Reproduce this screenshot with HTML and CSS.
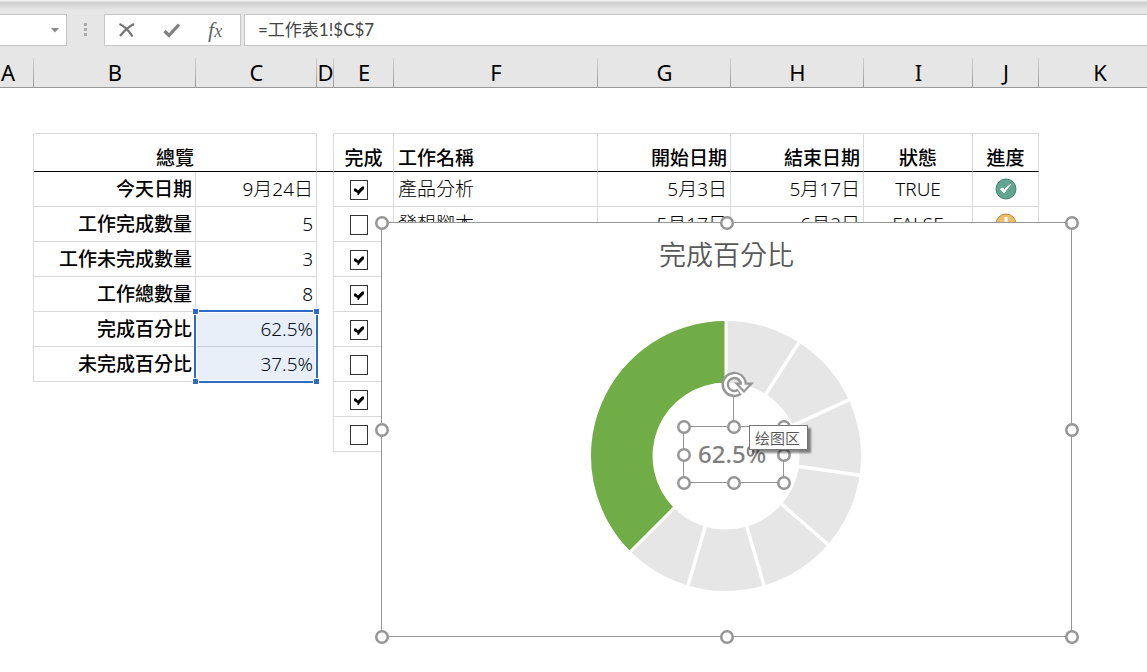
FILE: index.html
```html
<!DOCTYPE html>
<html lang="zh-Hant">
<head>
<meta charset="utf-8">
<title>工作表1</title>
<link rel="stylesheet" href="styles.css">
</head>
<body>
<header class="formula-bar">
  <div class="name-box">
    <input class="name-input" type="text" aria-label="名稱方塊">
    <button class="name-toggle" type="button" aria-label="展開名稱"><svg width="8" height="5" viewBox="0 0 8 5"><path d="M0 0h8L4 4.500z" fill="#888"/></svg></button>
  </div>
  <svg class="grip" width="4" height="14" viewBox="0 0 4 14"><path d="M0 0h3v3H0zM0 5h3v3H0zM0 10h3v3H0z" fill="#aaa"/></svg>
  <div class="actions">
    <button type="button" aria-label="取消"><svg width="18" height="16" viewBox="0 0 18 16"><path d="M1.500 2C6 4 11 9 14.500 14.500M16 2C10 5 6 9 2 14" fill="none" stroke="#757575" stroke-width="2.300"/></svg></button>
    <button type="button" aria-label="輸入"><svg width="18" height="16" viewBox="0 0 18 16"><path d="M1.500 9l4.500 4.500L16 2.500" fill="none" stroke="#808080" stroke-width="3.200"/></svg></button>
    <button class="fx" type="button" aria-label="插入函數">f<span class="fx-x">x</span></button>
  </div>
  <input class="formula" type="text" aria-label="資料編輯列" value="=工作表1!$C$7">
</header>

<main class="sheet">
  <table class="grid">
    <colgroup>
      <col class="w-a"><col class="w-b"><col class="w-c"><col class="w-d"><col class="w-e"><col class="w-f"><col class="w-g"><col class="w-g"><col class="w-i"><col class="w-j"><col>
    </colgroup>
    <thead>
      <tr class="letters"><th class="first" scope="col">A</th><th scope="col">B</th><th scope="col">C</th><th scope="col">D</th><th scope="col">E</th><th scope="col">F</th><th scope="col">G</th><th scope="col">H</th><th scope="col">I</th><th scope="col">J</th><th scope="col">K</th></tr>
    </thead>
    <tbody>
      <tr class="blank"><td></td><td class="line"></td><td class="line"></td><td></td><td class="line"></td><td class="line"></td><td class="line"></td><td class="line"></td><td class="line"></td><td class="line"></td><td></td></tr>
      <tr class="titles"><td class="side"></td><th class="cell" colspan="2">總覽</th><td class="cell"></td><th class="cell">完成</th><th class="cell left">工作名稱</th><th class="cell right">開始日期</th><th class="cell right">結束日期</th><th class="cell">狀態</th><th class="cell">進度</th><td></td></tr>
      <tr><td class="side"></td><th class="cell right">今天日期</th><td class="cell right">9月24日</td><td class="side"></td><td class="cell tick"><input type="checkbox" aria-label="產品分析" checked></td><td class="cell left">產品分析</td><td class="cell right">5月3日</td><td class="cell right">5月17日</td><td class="cell">TRUE</td><td class="cell"><svg class="status" width="22" height="22" viewBox="0 0 22 22"><circle cx="11" cy="11" r="10" fill="#62a591" stroke="#3f8170"/><path d="M5.500 11l3.500 4 2.500-3.500L16 6l-4.500 3.500-2 2L7 10z" fill="#fff" stroke="#fff"/></svg></td><td></td></tr>
      <tr><td class="side"></td><th class="cell right">工作完成數量</th><td class="cell right">5</td><td class="side"></td><td class="cell tick"><input type="checkbox" aria-label="發想腳本"></td><td class="cell left">發想腳本</td><td class="cell right">5月17日</td><td class="cell right">6月2日</td><td class="cell">FALSE</td><td class="cell"><svg class="status" width="22" height="22" viewBox="0 0 22 22"><circle cx="11" cy="11" r="10" fill="#e9bd6c" stroke="#b98a35"/><path d="M11 4v9M11 15v3" fill="none" stroke="#fff" stroke-width="3"/></svg></td><td></td></tr>
      <tr><td class="side"></td><th class="cell right">工作未完成數量</th><td class="cell right">3</td><td class="side"></td><td class="cell tick"><input type="checkbox" aria-label="工作 3" checked></td><td colspan="6"></td></tr>
      <tr><td class="side"></td><th class="cell right">工作總數量</th><td class="cell right">8</td><td class="side"></td><td class="cell tick"><input type="checkbox" aria-label="工作 4" checked></td><td colspan="6"></td></tr>
      <tr><td class="side"></td><th class="cell right">完成百分比</th><td class="cell right picked">62.5%<span class="range"><i class="knob tl"></i><i class="knob tr"></i><i class="knob bl"></i><i class="knob br"></i></span></td><td class="side"></td><td class="cell tick"><input type="checkbox" aria-label="工作 5" checked></td><td colspan="6"></td></tr>
      <tr><td class="side"></td><th class="cell right">未完成百分比</th><td class="cell right">37.5%</td><td class="side"></td><td class="cell tick"><input type="checkbox" aria-label="工作 6"></td><td colspan="6"></td></tr>
      <tr><td></td><td></td><td></td><td class="side"></td><td class="cell tick"><input type="checkbox" aria-label="工作 7" checked></td><td colspan="6"></td></tr>
      <tr><td></td><td></td><td></td><td class="side"></td><td class="cell tick"><input type="checkbox" aria-label="工作 8"></td><td colspan="6"></td></tr>
    </tbody>
  </table>

  <section class="chart" aria-label="完成百分比">
    <h2 class="chart-title">完成百分比</h2>
    <svg class="ring" width="690" height="414" viewBox="0 0 690 414">
      <g transform="translate(344 233)">
        <circle r="104.250" fill="none" stroke="#e6e6e6" stroke-width="61.500"/>
        <g stroke="#fff" stroke-width="3.500">
          <path d="M0-72V-137" transform="rotate(32.730)"/>
          <path d="M0-72V-137" transform="rotate(65.450)"/>
          <path d="M0-72V-137" transform="rotate(98.180)"/>
          <path d="M0-72V-137" transform="rotate(130.910)"/>
          <path d="M0-72V-137" transform="rotate(163.640)"/>
          <path d="M0-72V-137" transform="rotate(196.360)"/>
        </g>
        <path d="M0-135A135 135 0 0 0-95.460 95.460L-51.970 51.970A73.500 73.500 0 0 1 0-73.500z" fill="#70ad47"/>
        <path d="M0-72V-137M-50.900 50.900L-97 97" stroke="#fff" stroke-width="3"/>
      </g>
    </svg>
    <output class="percent">62.5%</output>
    <svg class="handles" width="690" height="414" viewBox="0 0 690 414">
      <path d="M302.500 204.500h100v56h-100zM352.500 174v30" fill="none" stroke="#969696"/>
      <g fill="#fff" stroke="#969696" stroke-width="2.500">
        <circle cx="1" cy="1" r="5.750"/><circle cx="346" cy="1" r="5.750"/><circle cx="691" cy="1" r="5.750"/>
        <circle cx="1" cy="208" r="5.750"/><circle cx="691" cy="208" r="5.750"/>
        <circle cx="1" cy="415" r="5.750"/><circle cx="346" cy="415" r="5.750"/><circle cx="691" cy="415" r="5.750"/>
        <circle cx="303" cy="205" r="5.750"/><circle cx="353" cy="205" r="5.750"/><circle cx="403" cy="205" r="5.750"/>
        <circle cx="303" cy="233" r="5.750"/><circle cx="403" cy="233" r="5.750"/>
        <circle cx="303" cy="261" r="5.750"/><circle cx="353" cy="261" r="5.750"/><circle cx="403" cy="261" r="5.750"/>
      </g>
      <g transform="translate(353 162.500)" fill="none">
        <path d="M5.500 7.300A9 9 0 1 1 9.200-.500" stroke="#969696" stroke-width="7.500"/>
        <path d="M2.500-.800H17.500L10 7z" fill="#fff" stroke="#969696" stroke-width="2.200"/>
        <path d="M4.500 7.900A9 9 0 1 1 9.300 1" stroke="#fff" stroke-width="2.600"/>
      </g>
    </svg>
    <div class="tip" role="tooltip" lang="zh-Hans">绘图区</div>
  </section>
</main>
</body>
</html>
```
FILE: styles.css
```css
* { box-sizing: border-box; }

body {
  margin: 0;
  min-height: 100vh;
  background: #fff;
  color: #000;
  font: 300 19px/24px "Noto Sans", "Noto Sans CJK TC", sans-serif;
  overflow: hidden;
}

button, input { font: inherit; margin: 0; padding: 0; }
button { border: 0; background: none; }

.formula-bar {
  display: flex;
  align-items: center;
  height: 58px;
  padding: 14px 0 12px;
  background: linear-gradient(#f0f0f0 0, #f0f0f0 1px, #cdcdcd 2px, #e6e6e6 10px);
}

.name-box, .actions, .formula {
  height: 32px;
  border: 1px solid #c6c6c6;
  background: #fff;
}

.name-box { display: flex; width: 67px; border-left: 0; }
.name-input { flex: 1; min-width: 0; border: 0; }
.name-toggle { display: grid; place-items: center; width: 22px; }
.grip { margin: 0 16px 0 17px; }

.actions {
  display: grid;
  grid-template-columns: repeat(3, 1fr);
  width: 137px;
  margin-right: 3px;
}

.actions button { display: grid; place-items: center start; padding-left: 13px; }
.actions .fx {
  display: block;
  color: #666;
  font: italic 400 22px/26px "Liberation Serif", serif;
  text-align: left;
}
.fx-x { font-size: 18px; }

.formula {
  flex: 1;
  min-width: 0;
  border-right: 0;
  padding: 0 0 3px 13px;
  color: #444;
  font: 400 17px/24px Lato, "Noto Sans CJK TC", sans-serif;
}

.sheet { position: relative; }

.grid {
  width: 100%;
  table-layout: fixed;
  border-collapse: separate;
  border-spacing: 0;
}

.w-a { width: 34px; }
.w-b { width: 162px; }
.w-c { width: 121px; }
.w-d { width: 17px; }
.w-e { width: 60px; }
.w-f { width: 204px; }
.w-g { width: 133px; }
.w-i { width: 109px; }
.w-j { width: 66px; }

.grid tr { height: 35px; }
.grid td, .grid th { padding: 0; text-align: center; white-space: nowrap; }
.grid th { font-weight: 500; }

.grid .letters { height: 30px; }
.grid .letters th {
  border-bottom: 1px solid #999;
  background: linear-gradient(#d0d0d0, #999) right / 1px 100% no-repeat #e6e6e6;
  font: 400 22px/29px "Noto Sans", sans-serif;
}
.grid .letters .first { padding-right: 18px; }
.grid .letters th:last-child { background: #e6e6e6; padding-left: 14px; }

.grid .blank { height: 46px; }
.line { border-bottom: 1px solid #d9d9d9; }
.side { border-right: 1px solid #d9d9d9; }
.cell { border: solid #d9d9d9; border-width: 0 1px 1px 0; }

.grid .titles { height: 38px; }
.grid .titles .cell { border-bottom-color: #000; padding-bottom: 1px; vertical-align: bottom; }

.grid .left { padding-left: 4px; text-align: left; }
.grid .right { padding-right: 3px; text-align: right; }
.grid .tick { padding-right: 10px; }

.tick input {
  appearance: none;
  display: block;
  width: 18px;
  height: 20px;
  margin: 2px auto 0;
  border: 1px solid #333;
  background: #fff;
}
.tick input:checked {
  background: #fff url("data:image/svg+xml,%3Csvg xmlns='http://www.w3.org/2000/svg' viewBox='0 0 16 18'%3E%3Cpath d='M3 7.500h2l2 2L11 5.500h2V8l-2 2-2 2-1.500 2H6.500v-2L3 10z'/%3E%3C/svg%3E") center / 16px 18px no-repeat;
}

.status { display: block; margin: 0 auto; }

.picked { position: relative; }
.range {
  position: absolute;
  inset: -2px -2px -37px;
  border: 2px solid #3269c4;
  box-shadow: inset 0 0 0 1px #fff;
  background: rgba(50, 105, 196, 0.11);
}
.knob {
  position: absolute;
  width: 7px;
  height: 7px;
  border: 1px solid #fff;
  background: #3269c4;
}
.tl, .tr { top: -4px; }
.bl, .br { bottom: -4px; }
.tl, .bl { left: -4px; }
.tr, .br { right: -4px; }

.chart {
  position: absolute;
  top: 164px;
  left: 381px;
  width: 691px;
  height: 415px;
  border: 1px solid #969696;
  background: #fff;
}

.chart-title {
  margin: 14px 0 0;
  color: #595959;
  font-size: 27px;
  font-weight: 350;
  line-height: 36px;
  text-align: center;
}

.ring, .handles { position: absolute; top: 0; left: 0; overflow: visible; }
.handles { top: -1px; left: -1px; }

.percent {
  position: absolute;
  top: 215px;
  left: 316px;
  color: #7f7f7f;
  font-size: 24px;
  font-weight: 500;
  line-height: 32px;
}

.tip {
  position: absolute;
  top: 202px;
  left: 367px;
  padding: 0 7px 0 5px;
  border: 1px solid #767676;
  background: #fff;
  box-shadow: 3px 3px 2px rgba(0, 0, 0, 0.45);
  color: #555;
  font: 350 15px/23px "Noto Sans CJK SC", sans-serif;
}
```
